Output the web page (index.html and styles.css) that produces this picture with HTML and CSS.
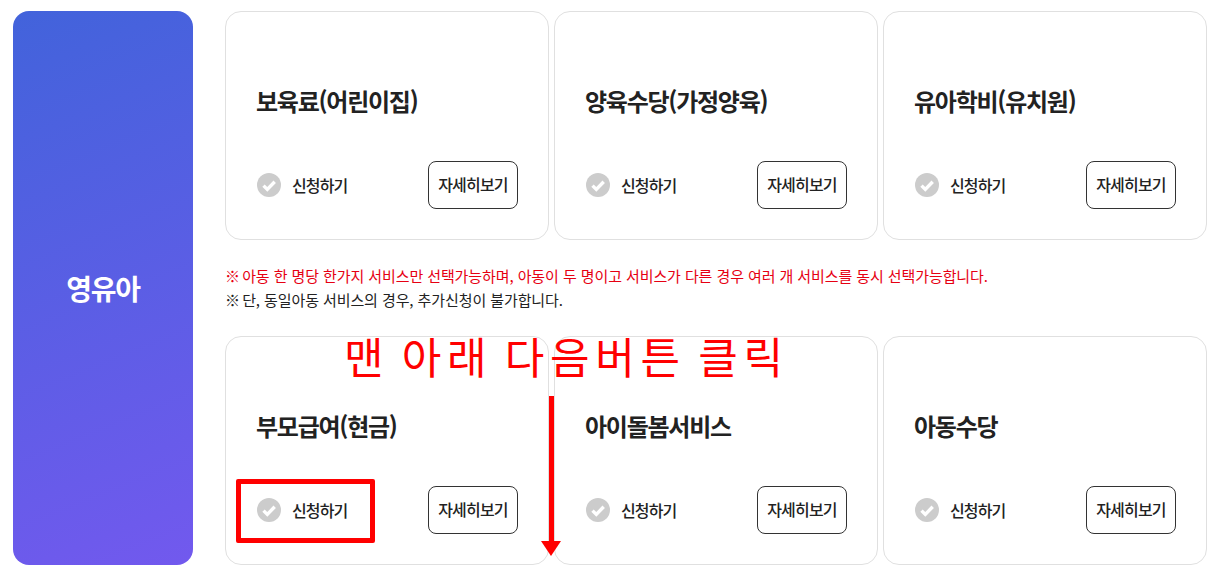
FILE: index.html
```html
<!DOCTYPE html>
<html lang="ko">
<head>
    <meta charset="UTF-8">
    <meta name="viewport" content="width=device-width, initial-scale=1.0">
    <title>영유아 서비스 선택</title>
    <link rel="stylesheet" href="styles.css">
</head>
<body>
    <div class="wrap">
        <div class="side">영유아</div>

        <div class="main">
            <div class="cards">
                <div class="card">
                    <h3>보육료(어린이집)</h3>
                    <div class="card-foot">
                        <label class="check"><svg viewBox="0 0 24 24"><circle cx="12" cy="12" r="12"/><path d="M6.5 12.6l3.8 3.8 7.4-7.6"/></svg><span>신청하기</span></label>
                        <button class="more">자세히보기</button>
                    </div>
                </div>
                <div class="card">
                    <h3>양육수당(가정양육)</h3>
                    <div class="card-foot">
                        <label class="check"><svg viewBox="0 0 24 24"><circle cx="12" cy="12" r="12"/><path d="M6.5 12.6l3.8 3.8 7.4-7.6"/></svg><span>신청하기</span></label>
                        <button class="more">자세히보기</button>
                    </div>
                </div>
                <div class="card">
                    <h3>유아학비(유치원)</h3>
                    <div class="card-foot">
                        <label class="check"><svg viewBox="0 0 24 24"><circle cx="12" cy="12" r="12"/><path d="M6.5 12.6l3.8 3.8 7.4-7.6"/></svg><span>신청하기</span></label>
                        <button class="more">자세히보기</button>
                    </div>
                </div>
            </div>

            <div class="notes">
                <p class="red"><span class="ref">※</span> 아동 한 명당 한가지 서비스만 선택가능하며, 아동이 두 명이고 서비스가 다른 경우 여러 개 서비스를 동시 선택가능합니다.</p>
                <p><span class="ref">※</span> 단, 동일아동 서비스의 경우, 추가신청이 불가합니다.</p>
            </div>

            <div class="cards">
                <div class="card">
                    <h3>부모급여(현금)</h3>
                    <div class="card-foot">
                        <label class="check"><svg viewBox="0 0 24 24"><circle cx="12" cy="12" r="12"/><path d="M6.5 12.6l3.8 3.8 7.4-7.6"/></svg><span>신청하기</span></label>
                        <button class="more">자세히보기</button>
                    </div>
                </div>
                <div class="card">
                    <h3>아이돌봄서비스</h3>
                    <div class="card-foot">
                        <label class="check"><svg viewBox="0 0 24 24"><circle cx="12" cy="12" r="12"/><path d="M6.5 12.6l3.8 3.8 7.4-7.6"/></svg><span>신청하기</span></label>
                        <button class="more">자세히보기</button>
                    </div>
                </div>
                <div class="card">
                    <h3>아동수당</h3>
                    <div class="card-foot">
                        <label class="check"><svg viewBox="0 0 24 24"><circle cx="12" cy="12" r="12"/><path d="M6.5 12.6l3.8 3.8 7.4-7.6"/></svg><span>신청하기</span></label>
                        <button class="more">자세히보기</button>
                    </div>
                </div>
            </div>
        </div>
    </div>

    <!-- screenshot annotations -->
    <div class="mark-text">맨 아래 다음버튼 클릭</div>
    <div class="mark-box"></div>
    <svg class="mark-arrow" viewBox="0 0 20 160"><rect x="8" y="0" width="5" height="146"/><path d="M0 145h20l-10 15z"/></svg>
</body>
</html>
```

FILE: styles.css
```css
* {
    box-sizing: border-box;
}

body {
    margin: 0;
    background: #fff;
    color: #222;
    font-family: "Noto Sans CJK KR", "Noto Sans", sans-serif;
    overflow: hidden;
}

.wrap {
    display: flex;
    gap: 32px;
    padding: 11px 15px 0 13px;
}

.side {
    width: 180px;
    height: 554px;
    display: flex;
    align-items: center;
    justify-content: center;
    border-radius: 16px;
    background: linear-gradient(158deg, #4263db, #7259ee);
    color: #fff;
    font-size: 28px;
    font-weight: 700;
    letter-spacing: -1.2px;
}

.main {
    flex: 1;
}

.cards {
    display: flex;
    gap: 5px;
}

.card {
    flex: 1;
    height: 229px;
    padding: 0 30px;
    border: 1px solid #e0e0e0;
    border-radius: 16px;
    background: #fff;
}

.card h3 {
    margin: 71px 0 0;
    font-size: 24px;
    line-height: 36px;
    font-weight: 700;
    letter-spacing: -1.25px;
    color: #222;
}

.card-foot {
    display: flex;
    align-items: center;
    justify-content: space-between;
    margin-top: 42px;
}

.check {
    display: flex;
    align-items: center;
    gap: 11px;
    padding-left: 1px;
    font-size: 16px;
    line-height: 22px;
    font-weight: 500;
    letter-spacing: -0.85px;
}

.check svg {
    width: 24px;
    height: 24px;
}

.check span {
    margin-top: -1px;
}

.check circle {
    fill: #ccc;
}

.check path {
    fill: none;
    stroke: #fff;
    stroke-width: 3.4;
}

.more {
    width: 90px;
    height: 48px;
    padding: 0 0 2px;
    border: 1px solid #333;
    border-radius: 8px;
    background: #fff;
    color: #222;
    font-family: inherit;
    font-size: 16px;
    font-weight: 500;
    letter-spacing: -0.8px;
}

.notes {
    height: 96px;
    padding-top: 24px;
    font-size: 15px;
    line-height: 24px;
    letter-spacing: -0.09px;
}

.notes p {
    margin: 0;
}

.notes .ref {
    letter-spacing: -2px;
}

.notes .red {
    color: #e60012;
}

.mark-text {
    position: absolute;
    left: 344px;
    top: 327px;
    color: #f00;
    font-size: 43px;
    line-height: 56px;
    font-weight: 400;
    letter-spacing: 5.7px;
    word-spacing: -5.3px;
    white-space: nowrap;
}

.mark-box {
    position: absolute;
    left: 236px;
    top: 479px;
    width: 139px;
    height: 64px;
    border: 5px solid #f00;
    border-radius: 2px;
}

.mark-arrow {
    position: absolute;
    left: 541px;
    top: 396px;
    width: 20px;
    height: 160px;
    fill: #f00;
}
```
